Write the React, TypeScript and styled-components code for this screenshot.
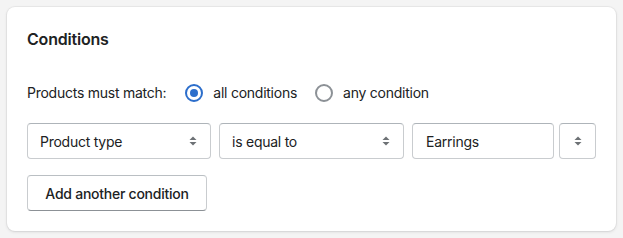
import React from "react";
import styled, { createGlobalStyle } from "styled-components";

const Global = createGlobalStyle`
  html, body { margin: 0; padding: 0; background: #f4f4f4; }
  body {
    font-family: Inter, "Noto Sans", "Liberation Sans", sans-serif;
    color: #202223;
    -webkit-font-smoothing: antialiased;
  }
`;

const Page = styled.div`
  padding: 7px 7px 8px 7px;
`;

const Card = styled.section`
  width: 609px;
  box-sizing: border-box;
  background: #ffffff;
  border-radius: 8px;
  box-shadow: 0 0 0 1px rgba(63, 63, 68, 0.05), 0 1px 3px 0 rgba(63, 63, 68, 0.15);
  padding: 20px;
  display: flex;
  flex-direction: column;
  font-size: 14px;
  letter-spacing: -0.25px;
`;

const Title = styled.h2`
  margin: 0;
  font-size: 16px;
  font-weight: 600;
  line-height: 24px;
  letter-spacing: -0.2px;
`;

const MatchRow = styled.div`
  margin-top: 30px;
  display: flex;
  align-items: center;
  height: 24px;
  line-height: 20px;
`;

const MatchLabel = styled.span`
  margin-right: 19px;
`;

const RadioLabel = styled.label`
  display: flex;
  align-items: center;
  gap: 10px;
  margin-right: 18px;
  cursor: pointer;
`;

const RadioCircle = styled.span<{ $checked?: boolean }>`
  width: 18px;
  height: 18px;
  box-sizing: border-box;
  border-radius: 50%;
  border: 2px solid ${(p) => (p.$checked ? "#2c6ecb" : "#8c9196")};
  display: flex;
  align-items: center;
  justify-content: center;
  &::after {
    content: "";
    width: 8px;
    height: 8px;
    border-radius: 50%;
    background: ${(p) => (p.$checked ? "#2c6ecb" : "transparent")};
  }
`;

const FieldRow = styled.div`
  margin-top: 18px;
  display: flex;
  align-items: center;
`;

const SelectBox = styled.div<{ $width: number; $gapRight: number }>`
  width: ${(p) => p.$width}px;
  height: 36px;
  box-sizing: border-box;
  margin-right: ${(p) => p.$gapRight}px;
  border: 1px solid #c9cccf;
  border-top-color: #aeb4b9;
  border-radius: 4px;
  display: flex;
  align-items: center;
  justify-content: space-between;
  padding: 0 13px 0 12px;
  background: #fff;
`;

const TextInput = styled.div`
  flex: 1;
  height: 36px;
  box-sizing: border-box;
  margin-right: 5px;
  border: 1px solid #c9cccf;
  border-top-color: #aeb4b9;
  border-radius: 4px;
  display: flex;
  align-items: center;
  padding: 0 12px 0 13px;
`;

const IconSelect = styled.div`
  width: 37px;
  height: 36px;
  box-sizing: border-box;
  border: 1px solid #c9cccf;
  border-top-color: #aeb4b9;
  border-radius: 4px;
  display: flex;
  align-items: center;
  justify-content: center;
`;

const Button = styled.button`
  margin-top: 16px;
  align-self: flex-start;
  width: 180px;
  height: 36px;
  box-sizing: border-box;
  background: #fff;
  border: 1px solid #c9cccf;
  border-top-color: #babfc3;
  border-bottom-color: #8c9196;
  border-radius: 4px;
  font-family: inherit;
  font-size: 14px;
  font-weight: 500;
  letter-spacing: -0.25px;
  white-space: nowrap;
  color: #202223;
  padding: 0 12px;
`;

const Chevron = () => (
  <svg width="8" height="12" viewBox="0 0 8 12" fill="#6d7175">
    <path d="M4 1.5 L7.5 5 H0.5 Z" />
    <path d="M4 10.5 L0.5 7 H7.5 Z" />
  </svg>
);

export default function App() {
  return (
    <Page>
      <Global />
      <Card>
        <Title>Conditions</Title>
        <MatchRow>
          <MatchLabel>Products must match:</MatchLabel>
          <RadioLabel>
            <RadioCircle $checked />
            all conditions
          </RadioLabel>
          <RadioLabel>
            <RadioCircle />
            any condition
          </RadioLabel>
        </MatchRow>
        <FieldRow>
          <SelectBox $width={184} $gapRight={8}>
            <span>Product type</span>
            <Chevron />
          </SelectBox>
          <SelectBox $width={185} $gapRight={8}>
            <span>is equal to</span>
            <Chevron />
          </SelectBox>
          <TextInput>Earrings</TextInput>
          <IconSelect>
            <Chevron />
          </IconSelect>
        </FieldRow>
        <Button>Add another condition</Button>
      </Card>
    </Page>
  );
}
